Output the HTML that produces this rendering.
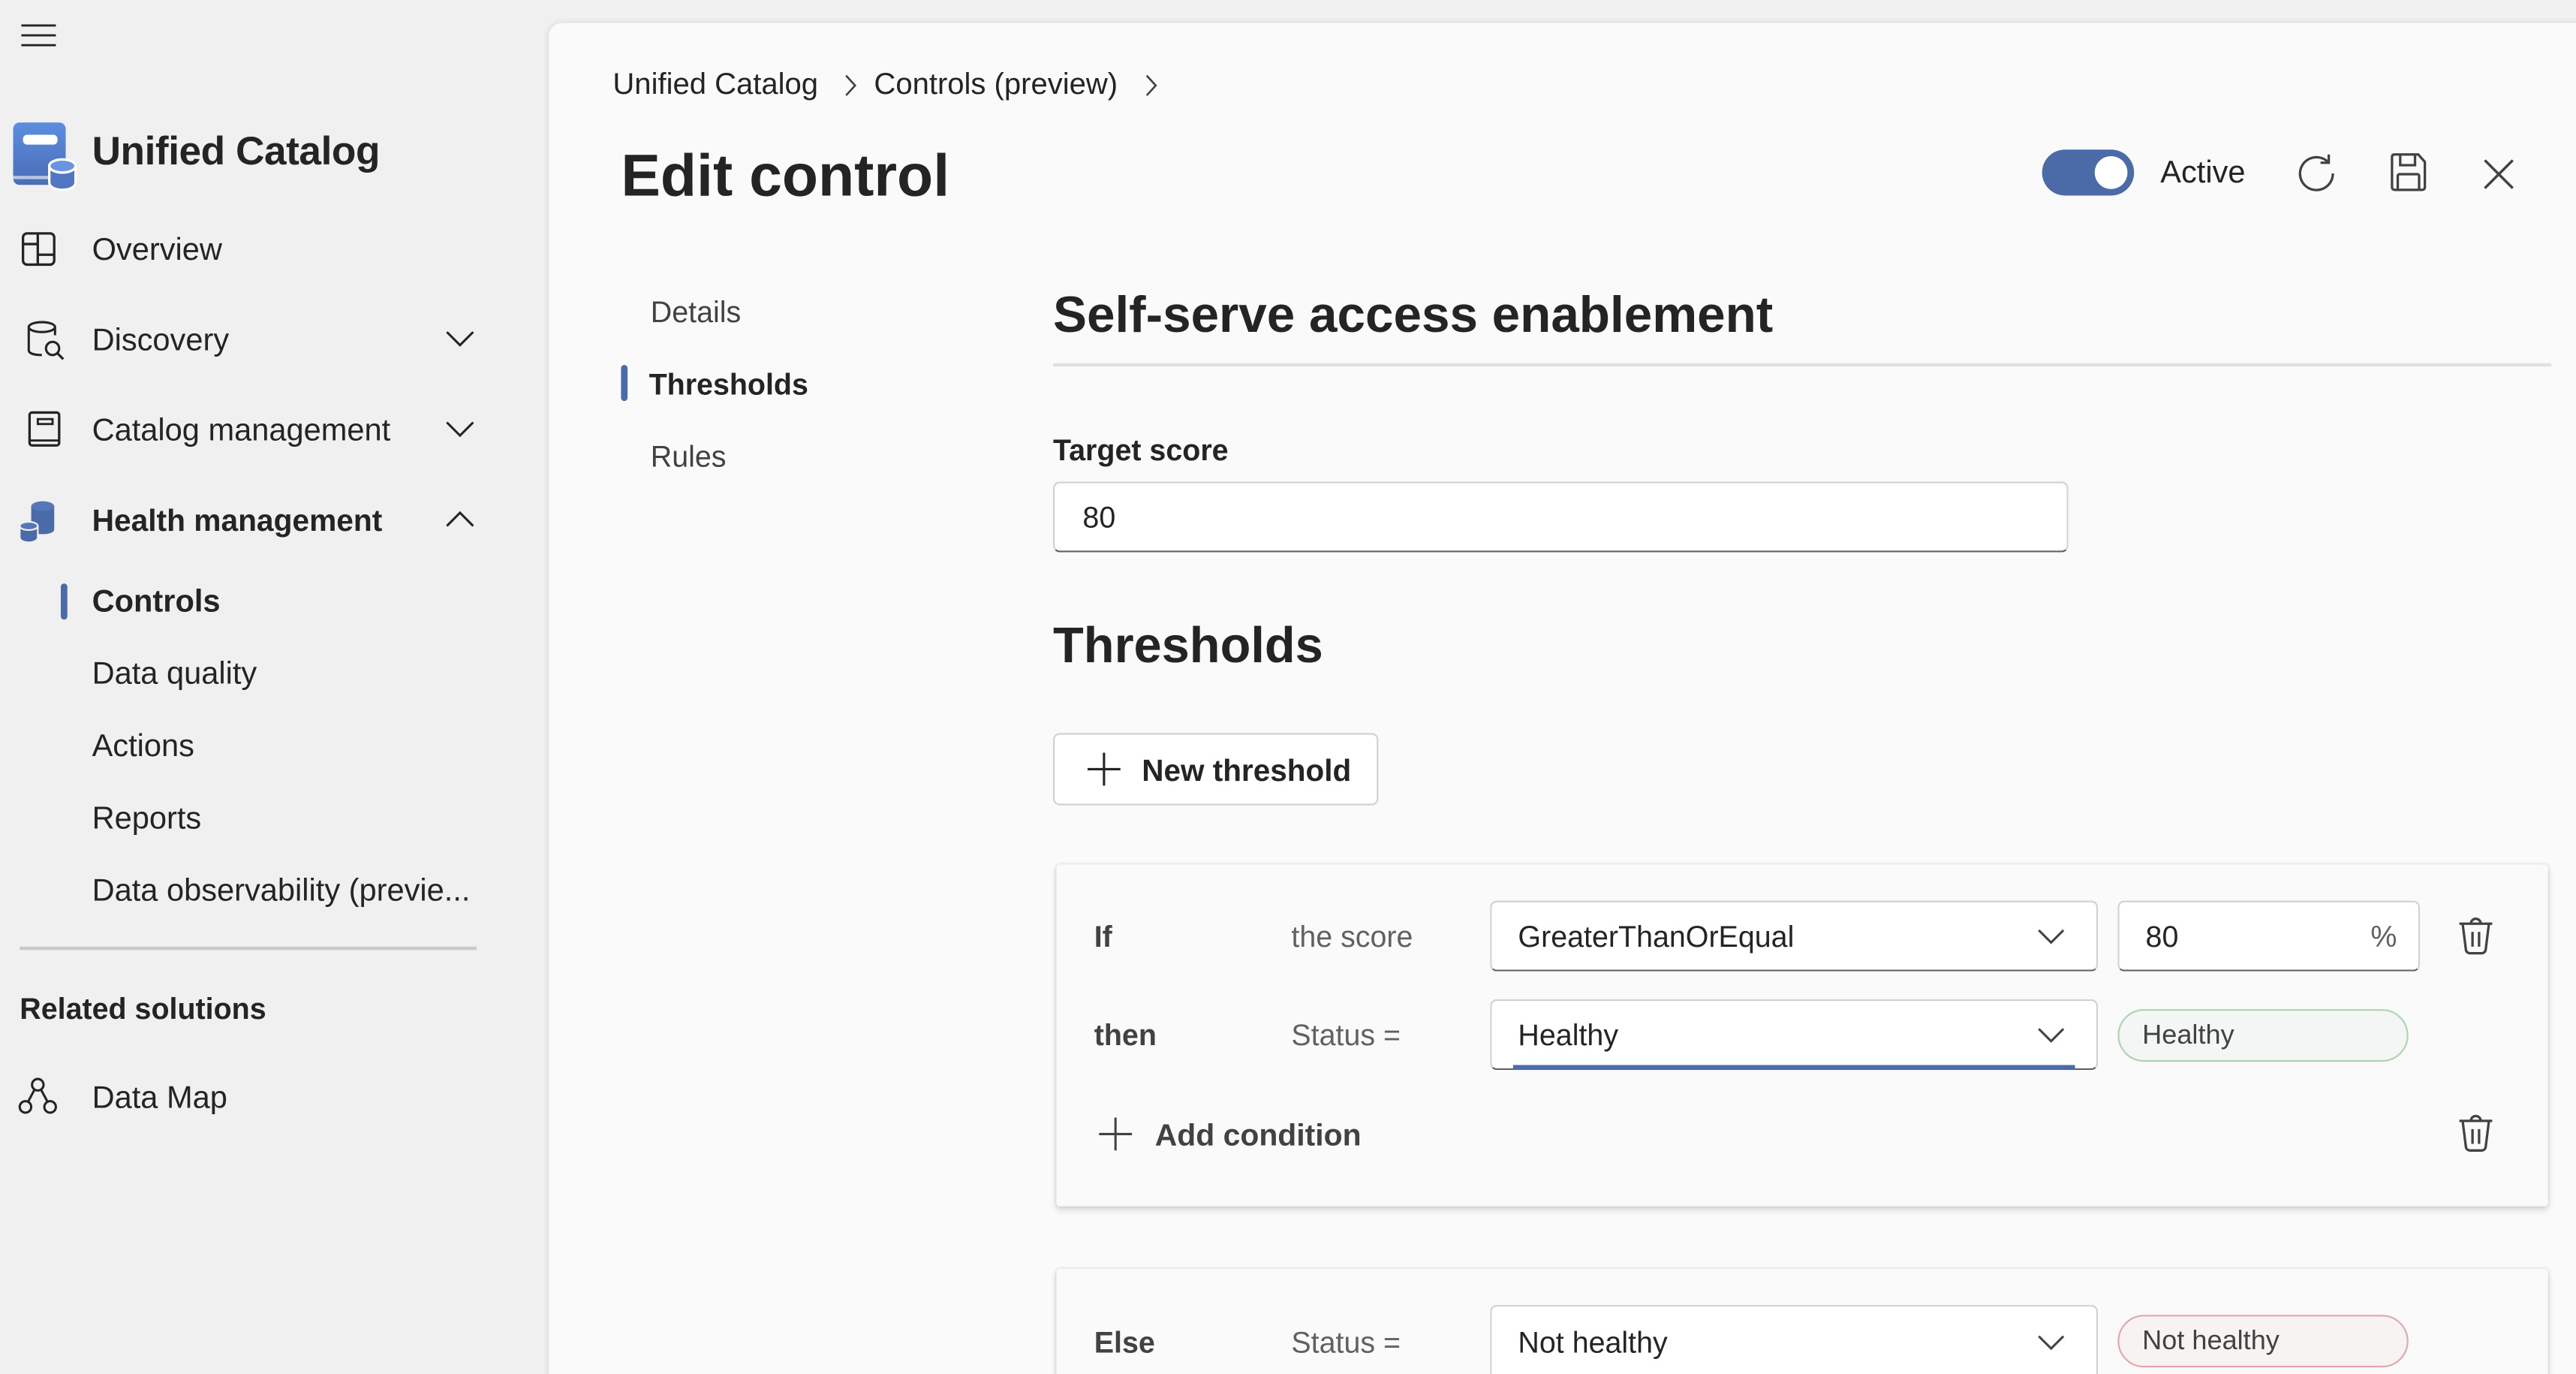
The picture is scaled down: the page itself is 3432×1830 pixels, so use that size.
<!DOCTYPE html>
<html><head><meta charset="utf-8">
<style>
html,body{margin:0;padding:0;background:#f0f0f0;overflow:hidden;width:3432px;height:1830px}
#clip{position:absolute;left:0;top:0;width:3432px;height:1830px;overflow:hidden}
#w{position:absolute;left:0;top:0;width:1568px;height:836px;transform:scale(2.18878,2.18900);transform-origin:0 0;font-family:"Liberation Sans",sans-serif;color:#242424}
.t{position:absolute;white-space:nowrap;line-height:1}
.ab{position:absolute}
svg{position:absolute;overflow:visible}
.main{position:absolute;left:334px;top:14px;width:1240px;height:840px;background:#fafafa;border-top-left-radius:8px;box-shadow:0 0 4px rgba(0,0,0,.12)}
.inp{position:absolute;background:#fff;border:1px solid #d1d1d1;border-bottom:1.5px solid #616161;border-radius:4px;box-sizing:border-box}
.card{position:absolute;background:#fafafa;box-shadow:0 2px 4px rgba(0,0,0,.14),0 0 2px rgba(0,0,0,.12);border-radius:2px}
.pill{position:absolute;border-radius:16px;box-sizing:border-box}
</style></head><body><div id="clip"><div id="w">

<svg style="left:12px;top:14px" width="24" height="16"><path d="M1 1.5H22M1 7.5H22M1 13.5H22" stroke="#242424" stroke-width="1.3"/></svg>
<svg style="left:7px;top:74px" width="40" height="42" viewBox="0 0 40 42">
<defs><linearGradient id="g1" x1="0" y1="0" x2="0" y2="1"><stop offset="0" stop-color="#5b8ee0"/><stop offset="1" stop-color="#4a6db5"/></linearGradient></defs>
<rect x="1" y="0.5" width="32" height="38" rx="4" fill="url(#g1)"/>
<rect x="7" y="8" width="21" height="6" rx="2.5" fill="#fff"/>
<rect x="1" y="33" width="24" height="2" fill="#fff" opacity=".6"/>
<path d="M23 27v10c0 3 4 4.5 8 4.5s8-1.5 8-4.5V27z" fill="#5177c3" stroke="#fff" stroke-width="1.5"/>
<ellipse cx="31" cy="27" rx="8" ry="4" fill="#6a94de" stroke="#fff" stroke-width="1.5"/>
</svg>
<div class="t" style="left:56px;top:81px;font-size:24.3px;font-weight:600;letter-spacing:-0.2px">Unified Catalog</div>

<svg style="left:13px;top:141px" width="22" height="22"><rect x="1" y="1" width="19" height="19" rx="2.5" fill="none" stroke="#242424" stroke-width="1.5"/><path d="M10 1v19M1 7.5h9M10 14h10" stroke="#242424" stroke-width="1.5" fill="none"/></svg>
<div class="t" style="left:56px;top:143px;font-size:19px">Overview</div>

<svg style="left:16px;top:194px" width="26" height="26"><ellipse cx="9.5" cy="5" rx="8" ry="3" fill="none" stroke="#242424" stroke-width="1.4"/><path d="M1.5 5v14c0 2 3 3 8 3M17.5 5v5" fill="none" stroke="#242424" stroke-width="1.4"/><circle cx="16" cy="18" r="4" fill="none" stroke="#242424" stroke-width="1.4"/><path d="M19 21l3.5 3.5" stroke="#242424" stroke-width="1.5"/></svg>
<div class="t" style="left:56px;top:198px;font-size:19px">Discovery</div>
<svg style="left:271px;top:201px" width="18" height="10"><path d="M1 1l8 8 8-8" fill="none" stroke="#242424" stroke-width="1.4"/></svg>

<svg style="left:17px;top:250px" width="22" height="24"><rect x="1" y="1" width="18" height="20" rx="1.5" fill="none" stroke="#242424" stroke-width="1.5"/><rect x="6" y="5" width="9" height="3" fill="none" stroke="#242424" stroke-width="1.3"/><path d="M1 18h18" stroke="#242424" stroke-width="1.3"/></svg>
<div class="t" style="left:56px;top:253px;font-size:19px">Catalog management</div>
<svg style="left:271px;top:256px" width="18" height="10"><path d="M1 1l8 8 8-8" fill="none" stroke="#242424" stroke-width="1.4"/></svg>

<svg style="left:11px;top:304px" width="26" height="26"><path d="M8 4v14c0 2 3 3 7 3s7-1 7-3V4z" fill="#4a6aa8"/><ellipse cx="15" cy="4" rx="7" ry="3" fill="#5577b8"/><path d="M1 16v7c0 2 3 3 5.5 3s5.5-1 5.5-3v-7z" fill="#4a6aa8" stroke="#f0f0f0" stroke-width="1"/><ellipse cx="6.5" cy="16" rx="5.5" ry="2.5" fill="#5577b8" stroke="#f0f0f0" stroke-width="1"/></svg>
<div class="t" style="left:56px;top:308px;font-size:18.6px;font-weight:600">Health management</div>
<svg style="left:271px;top:311px" width="18" height="10"><path d="M1 9l8-8 8 8" fill="none" stroke="#242424" stroke-width="1.4"/></svg>

<div class="ab" style="left:37px;top:355px;width:4px;height:22px;border-radius:2px;background:#4a6aa8"></div>
<div class="t" style="left:56px;top:357px;font-size:19px;font-weight:600">Controls</div>
<div class="t" style="left:56px;top:401px;font-size:19px">Data quality</div>
<div class="t" style="left:56px;top:445px;font-size:19px">Actions</div>
<div class="t" style="left:56px;top:489px;font-size:19px">Reports</div>
<div class="t" style="left:56px;top:533px;font-size:19px">Data observability (previe...</div>
<div class="ab" style="left:12px;top:576px;width:278px;height:1.5px;background:#c8c8c8"></div>
<div class="t" style="left:12px;top:605px;font-size:18px;font-weight:600">Related solutions</div>
<svg style="left:11px;top:655px" width="24" height="24"><circle cx="12" cy="5" r="3.5" fill="none" stroke="#242424" stroke-width="1.4"/><circle cx="4.5" cy="18.5" r="3.5" fill="none" stroke="#242424" stroke-width="1.4"/><circle cx="19.5" cy="18.5" r="3.5" fill="none" stroke="#242424" stroke-width="1.4"/><path d="M10 8l-4 7.5M14 8l4 7.5" stroke="#242424" stroke-width="1.4"/></svg>
<div class="t" style="left:56px;top:659px;font-size:19px">Data Map</div>

<div class="main"></div>
<div class="t" style="left:373px;top:42px;font-size:18.3px">Unified Catalog</div>
<svg style="left:514px;top:45px" width="8" height="14"><path d="M1 1l5.5 6L1 13" fill="none" stroke="#424242" stroke-width="1.2"/></svg>
<div class="t" style="left:532px;top:42px;font-size:18.3px">Controls (preview)</div>
<svg style="left:697px;top:45px" width="8" height="14"><path d="M1 1l5.5 6L1 13" fill="none" stroke="#424242" stroke-width="1.2"/></svg>
<div class="t" style="left:378px;top:89px;font-size:36px;font-weight:600">Edit control</div>

<div class="ab" style="left:1243px;top:91px;width:56px;height:28px;border-radius:14px;background:#4a6aa8"></div>
<div class="ab" style="left:1275px;top:95px;width:20px;height:20px;border-radius:10px;background:#fff"></div>
<div class="t" style="left:1315px;top:96px;font-size:19px">Active</div>
<svg style="left:1398px;top:93px" width="24" height="24"><path d="M19 5.5A10 10 0 1 0 22 12.5" fill="none" stroke="#424242" stroke-width="1.5"/><path d="M19.5 1v5h-5" fill="none" stroke="#424242" stroke-width="1.5"/></svg>
<svg style="left:1454px;top:93px" width="24" height="24"><path d="M3 1h15l4 4.5V21a1.5 1.5 0 0 1-1.5 1.5h-17A1.5 1.5 0 0 1 2 21V2.5A1.5 1.5 0 0 1 3 1z" fill="none" stroke="#424242" stroke-width="1.5"/><path d="M7 1.5v6h9v-6M5.5 22V14a1 1 0 0 1 1-1h11a1 1 0 0 1 1 1v8" fill="none" stroke="#424242" stroke-width="1.5"/></svg>
<svg style="left:1511px;top:96px" width="20" height="20"><path d="M1.5 1.5l17 17M18.5 1.5l-17 17" stroke="#424242" stroke-width="1.6"/></svg>

<div class="t" style="left:396px;top:181px;font-size:18px;color:#424242">Details</div>
<div class="ab" style="left:378px;top:222px;width:3.5px;height:22px;border-radius:2px;background:#4a6aa8"></div>
<div class="t" style="left:395px;top:225px;font-size:18px;font-weight:600">Thresholds</div>
<div class="t" style="left:396px;top:269px;font-size:18px;color:#424242">Rules</div>

<div class="t" style="left:641px;top:177px;font-size:30.8px;font-weight:600">Self-serve access enablement</div>
<div class="ab" style="left:641px;top:221px;width:912px;height:1.5px;background:#e0e0e0"></div>
<div class="t" style="left:641px;top:265px;font-size:18px;font-weight:600">Target score</div>
<div class="inp" style="left:641px;top:293px;width:618px;height:43px"></div>
<div class="t" style="left:659px;top:306px;font-size:18px">80</div>
<div class="t" style="left:641px;top:378px;font-size:30.5px;font-weight:600">Thresholds</div>
<div class="ab" style="left:641px;top:446px;width:198px;height:44px;background:#fff;border:1px solid #d1d1d1;border-radius:4px;box-sizing:border-box"></div>
<svg style="left:661px;top:457px" width="22" height="22"><path d="M11 1v20M1 11h20" stroke="#242424" stroke-width="1.4"/></svg>
<div class="t" style="left:695px;top:460px;font-size:18.5px;font-weight:600">New threshold</div>

<div class="card" style="left:643px;top:526px;width:908px;height:208px"></div>
<div class="t" style="left:666px;top:561px;font-size:18px;font-weight:700;color:#424242">If</div>
<div class="t" style="left:786px;top:561px;font-size:18px;color:#616161">the score</div>
<div class="inp" style="left:907px;top:548px;width:370px;height:43px"></div>
<div class="t" style="left:924px;top:561px;font-size:18px">GreaterThanOrEqual</div>
<svg style="left:1240px;top:565px" width="17" height="10"><path d="M1 1l7.5 7.5L16 1" fill="none" stroke="#424242" stroke-width="1.4"/></svg>
<div class="inp" style="left:1289px;top:548px;width:184px;height:43px"></div>
<div class="t" style="left:1306px;top:561px;font-size:18px">80</div>
<div class="t" style="left:1443px;top:561px;font-size:18px;color:#616161">%</div>
<svg style="left:1496px;top:558px" width="22" height="24"><path d="M1 4h20M8 4a3 3 0 0 1 6 0M3 4l2 16a2.5 2.5 0 0 0 2.5 2h7a2.5 2.5 0 0 0 2.5-2l2-16M9 9v9M13 9v9" fill="none" stroke="#424242" stroke-width="1.5"/></svg>

<div class="t" style="left:666px;top:621px;font-size:18px;font-weight:700;color:#424242">then</div>
<div class="t" style="left:786px;top:621px;font-size:18px;color:#616161">Status =</div>
<div class="inp" style="left:907px;top:608px;width:370px;height:43px"></div>
<div class="ab" style="left:921px;top:648px;width:342px;height:2.5px;background:#4a6aa8"></div>
<div class="t" style="left:924px;top:621px;font-size:18px">Healthy</div>
<svg style="left:1240px;top:625px" width="17" height="10"><path d="M1 1l7.5 7.5L16 1" fill="none" stroke="#424242" stroke-width="1.4"/></svg>
<div class="pill" style="left:1289px;top:614px;width:177px;height:32px;border:1.5px solid #b0d3b2;background:#f3f6f4"></div>
<div class="t" style="left:1304px;top:622px;font-size:16.5px;color:#424242">Healthy</div>

<svg style="left:668px;top:679px" width="22" height="22"><path d="M11 1v20M1 11h20" stroke="#424242" stroke-width="1.4"/></svg>
<div class="t" style="left:703px;top:682px;font-size:18.7px;font-weight:600;color:#424242">Add condition</div>
<svg style="left:1496px;top:678px" width="22" height="24"><path d="M1 4h20M8 4a3 3 0 0 1 6 0M3 4l2 16a2.5 2.5 0 0 0 2.5 2h7a2.5 2.5 0 0 0 2.5-2l2-16M9 9v9M13 9v9" fill="none" stroke="#424242" stroke-width="1.5"/></svg>

<div class="card" style="left:643px;top:772px;width:908px;height:80px"></div>
<div class="t" style="left:666px;top:808px;font-size:18px;font-weight:700;color:#424242">Else</div>
<div class="t" style="left:786px;top:808px;font-size:18px;color:#616161">Status =</div>
<div class="inp" style="left:907px;top:794px;width:370px;height:60px"></div>
<div class="t" style="left:924px;top:808px;font-size:18px">Not healthy</div>
<svg style="left:1240px;top:812px" width="17" height="10"><path d="M1 1l7.5 7.5L16 1" fill="none" stroke="#424242" stroke-width="1.4"/></svg>
<div class="pill" style="left:1289px;top:800px;width:177px;height:32px;border:1.5px solid #e0a8ac;background:#f8f3f3"></div>
<div class="t" style="left:1304px;top:808px;font-size:16.5px;color:#424242">Not healthy</div>

</div></div></body></html>
